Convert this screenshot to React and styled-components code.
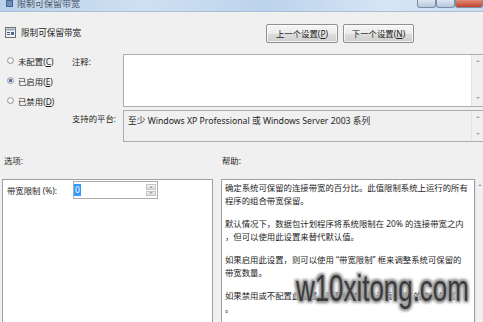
import React from 'react';
import styled, { createGlobalStyle } from 'styled-components';

const GlobalStyle = createGlobalStyle`
  html, body {
    margin: 0;
    padding: 0;
    background: #f0f0f0;
  }
  * {
    box-sizing: border-box;
  }
`;

const FONT = `"Noto Sans", "Noto Sans CJK SC", sans-serif`;

const Window = styled.div`
  position: relative;
  width: 483px;
  height: 322px;
  overflow: hidden;
  background: #f0f0f0;
  font-family: ${FONT};
  font-size: 8.4px;
  color: #1e1e1e;
  display: flex;
  flex-direction: column;
`;

const TitleBar = styled.div`
  height: 12px;
  flex: none;
  display: flex;
  justify-content: space-between;
  background: linear-gradient(90deg, #b9d1ea 0%, #cfe0f2 30%, #bcd3ec 55%, #d6e5f5 80%, #c8dcf1 100%);
  border-bottom: 1px solid #a9bfd6;
`;

const TitleText = styled.div`
  margin: -4px 0 0 14px;
  font-size: 9px;
  line-height: 12px;
  color: #4a5566;
  display: flex;
  align-items: center;
  gap: 4px;
`;

const TitleIcon = styled.span`
  width: 7px;
  height: 7px;
  margin-left: -8px;
  background: #6d8fb8;
  border: 1px solid #42648e;
`;

const Controls = styled.div`
  display: flex;
  height: 8px;
`;

const CtrlBtn = styled.div`
  width: ${p => p.$w}px;
  height: 8px;
  border: 1px solid #7a8ea7;
  border-top: none;
  border-radius: 0 0 3px 3px;
  background: ${p => (p.$close ? 'linear-gradient(#e08a7a, #c4412c)' : 'linear-gradient(#dbe5f0, #b7c8db)')};
`;

const Header = styled.div`
  height: 42px;
  flex: none;
  display: flex;
  align-items: center;
  padding: 0 69px 0 5px;
`;

const HeaderTitle = styled.div`
  display: flex;
  align-items: center;
  gap: 5px;
  font-size: 8.6px;
  flex: 1;
  margin-top: -2px;
`;

const PolicyIcon = styled.svg`
  width: 11px;
  height: 11px;
  flex: none;
`;

const NavButtons = styled.div`
  display: flex;
  gap: 5px;
`;

const Button = styled.div`
  width: ${p => p.$w}px;
  height: 19px;
  display: flex;
  align-items: center;
  justify-content: center;
  border: 1px solid #8e8f8f;
  border-radius: 2px;
  background: linear-gradient(#f6f6f6 0%, #ebebeb 50%, #dddddd 51%, #cfcfcf 100%);
  box-shadow: inset 0 0 0 1px rgba(255, 255, 255, 0.7);
  font-size: 8.4px;
  color: #222;
`;

const Settings = styled.div`
  height: 90px;
  flex: none;
  display: flex;
`;

const RadioCol = styled.div`
  width: 72px;
  flex: none;
  display: flex;
  flex-direction: column;
  gap: 9px;
  padding: 1px 0 0 7px;
`;

const RadioRow = styled.div`
  display: flex;
  align-items: center;
  gap: 4px;
  height: 11px;
`;

const RadioDot = styled.span`
  width: 7px;
  height: 7px;
  border-radius: 50%;
  border: 1px solid #9a9a9a;
  background: radial-gradient(circle, ${p => (p.$on ? '#3d5f9c 0, #5a7fbf 1.5px, #e8e8e8 2px' : '#ffffff 0, #e6e6e6 3px')});
`;

const Fields = styled.div`
  flex: 1;
  display: grid;
  grid-template-columns: 51px 1fr;
  grid-template-rows: 53px 32px;
  row-gap: 3px;
`;

const FieldLabel = styled.div`
  padding-top: ${p => p.$top}px;
`;

const Box = styled.div`
  display: flex;
  border: 1px solid #abadb3;
  border-right: none;
  background: ${p => (p.$gray ? '#f0f0f0' : '#ffffff')};
`;

const BoxText = styled.div`
  flex: 1;
  padding: 3px 0 0 4px;
  white-space: nowrap;
  font-size: ${p => p.$size || 8.4}px;
`;

const ScrollStrip = styled.div`
  width: ${p => p.$w}px;
  flex: none;
  display: flex;
  flex-direction: column;
  justify-content: space-between;
  align-items: center;
  padding: 5px 0 ${p => p.$bottom}px;
  background: #f0f0f0;
  border-left: 1px solid #e2e2e2;
`;

const Arrow = styled.span`
  width: 0;
  height: 0;
  border-left: 2px solid transparent;
  border-right: 2px solid transparent;
  ${p => (p.$down ? 'border-top: 2px solid #a8a8a8;' : 'border-bottom: 2px solid #a8a8a8;')}
`;

const SectionLabels = styled.div`
  height: 35px;
  flex: none;
  display: flex;
  align-items: center;
  padding: 0 0 3px 4px;
`;

const SectionLabel = styled.div`
  width: ${p => p.$w}px;
`;

const Panels = styled.div`
  flex: 1;
  display: flex;
  gap: 8px;
  padding-left: 2px;
`;

const OptionsPanel = styled.div`
  width: 211px;
  flex: none;
  background: #ffffff;
  border: 1px solid #a0a0a0;
  border-bottom: none;
  padding: 1px 0 0 4px;
`;

const OptionRow = styled.div`
  display: flex;
  align-items: center;
  height: 18px;
`;

const OptionLabel = styled.div`
  width: 66px;
`;

const SpinInput = styled.div`
  width: 85px;
  height: 18px;
  display: flex;
  border: 1px solid #abadb3;
  background: #fff;
  padding: 2px 0 2px 0;
`;

const Selected = styled.span`
  background: #3399ff;
  color: #fff;
  height: 12px;
  line-height: 12px;
  padding: 0 1px;
`;

const SpinBox = styled.div`
  margin-left: auto;
  margin-right: 1px;
  width: 10px;
  display: flex;
  flex-direction: column;
  gap: 1px;
`;

const SpinBtn = styled.div`
  flex: 1;
  display: flex;
  align-items: center;
  justify-content: center;
  background: linear-gradient(#f4f4f4, #dcdcdc);
  border: 1px solid #c4c4c4;
`;

const HelpWrap = styled.div`
  flex: 1;
  display: flex;
`;

const HelpPanel = styled.div`
  flex: 1;
  background: #ffffff;
  border: 1px solid #a0a0a0;
  border-bottom: none;
  padding: 1px 0 0 3px;
  line-height: 13px;
  white-space: nowrap;
`;

const Para = styled.p`
  margin: 0 0 10px;
`;

const Watermark = styled.div`
  position: absolute;
  left: 296px;
  top: 268px;
  font-family: "Liberation Sans", Arial, sans-serif;
  font-size: 37px;
  color: #3c3c3c;
  transform: scaleX(0.7);
  transform-origin: left top;
  text-shadow: 0 0 2px #9a9a9a, 1px 1px 2px #9a9a9a, -1px -1px 2px #9a9a9a,
    2px 2px 3px #a5a5a5, -2px 2px 3px #a5a5a5, 2px -2px 3px #a5a5a5, -2px -2px 3px #a5a5a5;
`;

const Icon = () => (
  <PolicyIcon viewBox="0 0 11 11">
    <rect x="0.5" y="0.5" width="10" height="10" fill="#f4f4f4" stroke="#6f6f6f" />
    <rect x="1.5" y="1.5" width="8" height="2" fill="#8aa4c4" />
    <rect x="2" y="5" width="3" height="1" fill="#555" />
    <rect x="2" y="7" width="3" height="1" fill="#555" />
    <rect x="6" y="5" width="3" height="3" fill="#3d6eaa" />
  </PolicyIcon>
);

const Radio = ({ on, label, hot }) => (
  <RadioRow>
    <RadioDot $on={on} />
    <span>
      {label}(<u>{hot}</u>)
    </span>
  </RadioRow>
);

export default function App() {
  return (
    <>
      <GlobalStyle />
      <Window>
        <TitleBar>
          <TitleText>
            <TitleIcon />
            限制可保留带宽
          </TitleText>
          <Controls>
            <CtrlBtn $w={19} />
            <CtrlBtn $w={19} />
            <CtrlBtn $w={28} $close />
          </Controls>
        </TitleBar>

        <Header>
          <HeaderTitle>
            <Icon />
            限制可保留带宽
          </HeaderTitle>
          <NavButtons>
            <Button $w={72}>
              上一个设置(<u>P</u>)
            </Button>
            <Button $w={71}>
              下一个设置(<u>N</u>)
            </Button>
          </NavButtons>
        </Header>

        <Settings>
          <RadioCol>
            <Radio label="未配置" hot="C" />
            <Radio on label="已启用" hot="E" />
            <Radio label="已禁用" hot="D" />
          </RadioCol>
          <Fields>
            <FieldLabel $top={1}>注释:</FieldLabel>
            <Box>
              <BoxText />
              <ScrollStrip $w={12} $bottom={7}>
                <Arrow />
                <Arrow $down />
              </ScrollStrip>
            </Box>
            <FieldLabel $top={2}>支持的平台:</FieldLabel>
            <Box $gray>
              <BoxText $size={8.7}>至少 Windows XP Professional 或 Windows Server 2003 系列</BoxText>
              <ScrollStrip $w={12} $bottom={6}>
                <Arrow />
                <Arrow $down />
              </ScrollStrip>
            </Box>
          </Fields>
        </Settings>

        <SectionLabels>
          <SectionLabel $w={218}>选项:</SectionLabel>
          <SectionLabel>帮助:</SectionLabel>
        </SectionLabels>

        <Panels>
          <OptionsPanel>
            <OptionRow>
              <OptionLabel>带宽限制 (%):</OptionLabel>
              <SpinInput>
                <Selected>0</Selected>
                <SpinBox>
                  <SpinBtn>
                    <Arrow />
                  </SpinBtn>
                  <SpinBtn>
                    <Arrow $down />
                  </SpinBtn>
                </SpinBox>
              </SpinInput>
            </OptionRow>
          </OptionsPanel>
          <HelpWrap>
            <HelpPanel>
              <Para>
                确定系统可保留的连接带宽的百分比。此值限制系统上运行的所有
                <br />
                程序的组合带宽保留。
              </Para>
              <Para>
                默认情况下，数据包计划程序将系统限制在 20% 的连接带宽之内
                <br />
                ，但可以使用此设置来替代默认值。
              </Para>
              <Para>
                如果启用此设置，则可以使用 “带宽限制” 框来调整系统可保留的
                <br />
                带宽数量。
              </Para>
              <Para>
                如果禁用或不配置此设置，则系统使用默认值 20% 的连接带宽
                <br />
                。
              </Para>
            </HelpPanel>
            <ScrollStrip $w={8} $bottom={0}>
              <Arrow />
            </ScrollStrip>
          </HelpWrap>
        </Panels>

        <Watermark>w10xitong.com</Watermark>
      </Window>
    </>
  );
}
